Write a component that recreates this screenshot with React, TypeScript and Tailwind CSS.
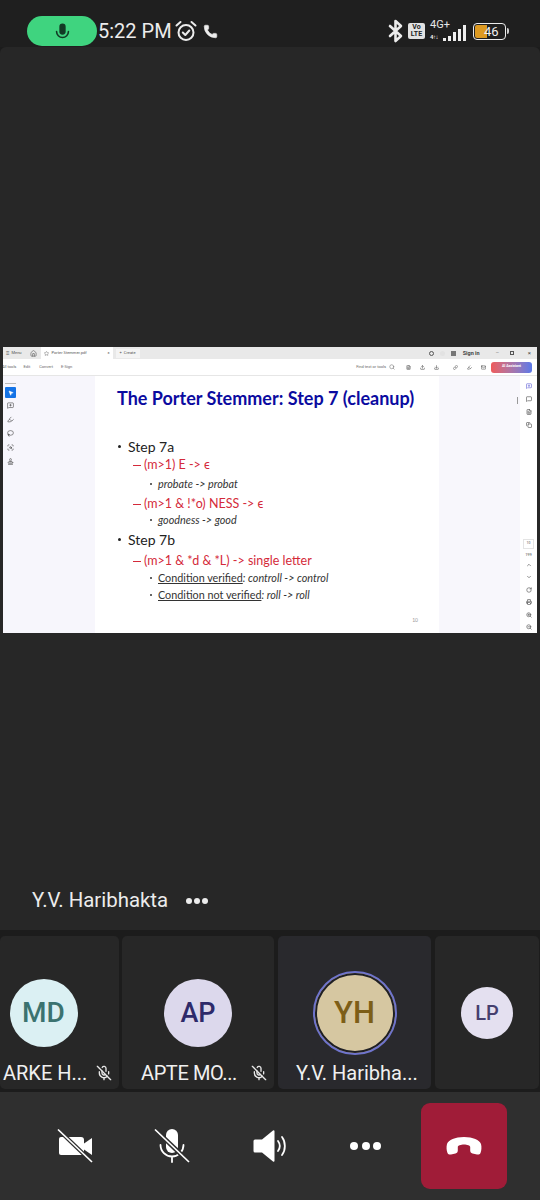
import { ChevronDown, ChevronUp, Copy, Download, FileText, Highlighter, Home, Lasso, Link, Mail, MessageSquare, MessageSquarePlus, MicOff, MousePointer2, Phone, Printer, RotateCw, ScanSearch, Search, Stamp, Star, Upload, ZoomIn, ZoomOut } from "lucide-react";
import type { ReactNode } from "react";

const FONT = "font-['Roboto','Liberation_Sans',sans-serif]";
const SLIDE_FONT = "font-['Lato','Liberation_Sans',sans-serif]";

function MicIcon({ className }: { className?: string }) {
  return (
    <svg viewBox="0 0 24 24" className={className} fill="none">
      <rect x="8" y="2" width="8" height="14" rx="4" fill="currentColor" />
      <path d="M4.500 12a7.500 7.500 0 0 0 15 0" stroke="currentColor" strokeWidth="2" strokeLinecap="round" />
    </svg>
  );
}

function AlarmIcon() {
  return (
    <svg viewBox="0 0 22 22" className="ml-[3px] h-[22px] w-[22px]" fill="none" stroke="currentColor" strokeWidth="2" strokeLinecap="round" strokeLinejoin="round">
      <circle cx="11" cy="12.500" r="7.500" />
      <path d="M7.800 12.500 10.300 15l4-4.500" />
      <path d="M1.500 5.500 5.500 2M20.500 5.500 16.500 2" />
    </svg>
  );
}

function BluetoothIcon() {
  return (
    <svg viewBox="0 0 16 24" className="ml-auto h-[24px] w-[16px]" fill="none" stroke="currentColor" strokeWidth="2.600" strokeLinejoin="round" strokeLinecap="round">
      <path d="M2 7l11 10-5.500 5V2L13 7 2 17" />
    </svg>
  );
}

function StatusBar() {
  return (
    <div className="flex h-[47px] items-center bg-[#1f1f1f] pt-[15px] text-[#ececec]">
      <div className="ml-[27px] flex h-[30px] w-[70px] items-center justify-center rounded-full bg-[#3fd47f] text-[#123a25]">
        <MicIcon className="h-[19px] w-[19px]" />
      </div>
      <span className="ml-[1px] text-[20px] leading-none">5:22 PM</span>
      <AlarmIcon />
      <Phone className="ml-[6px] h-[15px] w-[15px]" fill="currentColor" strokeWidth={1} />

      <BluetoothIcon />
      <div className="ml-[4px] flex h-[16px] w-[17px] flex-col items-center justify-center rounded-[2px] bg-[#e2e2e2] text-[7px] font-bold leading-[7px] text-[#222]">
        <span>Vo</span>
        <span>LTE</span>
      </div>
      <div className="relative ml-[5px] h-[20px] w-[36px]">
        <span className="absolute left-0 top-[-2px] text-[11px] leading-[11px] text-[#e8e8e8]">4G+</span>
        <span className="absolute bottom-[1px] left-0 text-[6px] font-bold leading-none tracking-[-0.5px] text-[#e8e8e8]">4↑↓</span>
        <div className="absolute bottom-0 right-0 flex items-end gap-[2px]">
          <div className="h-[3px] w-[3px] bg-[#eee]" />
          <div className="h-[5px] w-[3px] bg-[#eee]" />
          <div className="h-[9px] w-[3px] bg-[#eee]" />
          <div className="h-[12px] w-[3px] bg-[#eee]" />
          <div className="h-[16px] w-[3px] bg-[#eee]" />
        </div>
      </div>
      <div className="ml-[7px] flex h-[17px] w-[33px] items-center rounded-[4px] border-[1.5px] border-[#ececec] p-[1px]">
        <div className="relative flex h-full w-full items-center rounded-[2px]">
          <div className="h-full w-[12px] rounded-l-[2px] bg-[#dd9a22]" />
          <span className="absolute left-[9px] text-[13px] leading-none text-[#f0f0f0]">46</span>
        </div>
      </div>
      <div className="ml-[1px] mr-[31px] h-[6px] w-[2px] rounded-r-sm bg-[#cfcfcf]" />
    </div>
  );
}

function TitleBar() {
  return (
    <div className="flex h-[12px] items-center bg-[#e9e9e9] text-[4px] text-[#555]">
      <span className="ml-[3px] text-[6px] leading-none">≡</span>
      <span className="ml-[2px]">Menu</span>
      <Home className="ml-[8px] h-[7px] w-[7px]" />
      <div className="ml-[4px] flex h-full w-[72px] items-center bg-white px-[3px]">
        <Star className="h-[5px] w-[5px]" />
        <span className="ml-[3px]">Porter Stemmer.pdf</span>
        <span className="ml-auto">×</span>
      </div>
      <div className="ml-[3px] flex h-[9px] w-[24px] items-center justify-center gap-[2px] bg-[#f4f4f4]">
        <span>+</span>
        <span>Create</span>
      </div>
      <div className="ml-auto flex items-center text-[#444]">
        <span className="h-[5px] w-[5px] rounded-full border-[0.5px] border-[#555]" />
        <span className="ml-[6px] h-[5px] w-[5px] rounded-full bg-[#e2e2e2]" />
        <span className="ml-[6px] h-[5px] w-[5px] bg-[#777]" />
        <span className="ml-[7px] text-[5.5px] font-bold">Sign in</span>
        <span className="ml-[16px]">—</span>
        <span className="ml-[11px] h-[4px] w-[4px] border-[0.5px] border-[#555]" />
        <span className="ml-[14px] mr-[6px] text-[6px] leading-none">×</span>
      </div>
    </div>
  );
}

function ToolBar() {
  const icons = [FileText, Upload, Download, Link, Highlighter, Mail];
  return (
    <div className="flex h-[17px] items-center border-b border-[#e6e6e6] bg-white text-[4px] text-[#666]">
      <span className="-ml-[1px]">All tools</span>
      <span className="ml-[7px]">Edit</span>
      <span className="ml-[9px]">Convert</span>
      <span className="ml-[8px]">E-Sign</span>
      <span className="ml-auto">Find text or tools</span>
      <Search className="ml-[3px] h-[6px] w-[6px]" />
      <div className="ml-[11px] flex gap-[9px]">
        {icons.map((Icon, i) => (
          <Icon key={i} className={`h-[5px] w-[5px] ${i === 3 ? "ml-[5px]" : ""}`} strokeWidth={3} />
        ))}
      </div>
      <div className="ml-[5px] mr-[5px] flex h-[11px] w-[41px] items-center justify-center rounded-[3px] bg-gradient-to-r from-[#ee5a5a] to-[#5a78e8] text-[3.5px] font-bold text-white">
        AI Assistant
      </div>
    </div>
  );
}

function LeftTools() {
  const icons = [MessageSquarePlus, Highlighter, Lasso, ScanSearch, Stamp];
  return (
    <div className="flex w-[92px] flex-col bg-[#f7f6fc] pl-[2px] pt-[7px]">
      <div className="h-[1px] w-[11px] bg-[#bbb]" />
      <div className="mt-[3px] flex h-[11px] w-[11px] items-center justify-center rounded-[1px] bg-[#1473e6] text-white">
        <MousePointer2 className="h-[6px] w-[6px]" fill="currentColor" />
      </div>
      <div className="mt-[4px] flex flex-col gap-[7px] pl-[2px] text-[#444]">
        {icons.map((Icon, i) => (
          <Icon key={i} className="h-[7px] w-[7px]" />
        ))}
      </div>
    </div>
  );
}

function StepLine({ children, top }: { children: string; top: string }) {
  return (
    <p className={`flex items-center text-[14px] leading-[17px] text-[#222] ${top}`}>
      <span className="ml-[3px] mr-[7px] h-[3px] w-[3px] rounded-full bg-[#222]" />
      {children}
    </p>
  );
}

function RedLine({ children, top }: { children: string; top: string }) {
  return (
    <p className={`ml-[18px] flex items-center text-[12.5px] leading-[16px] text-[#d42a3a] ${top}`}>
      <span className="mr-[3px] h-[1px] w-[8px] bg-[#d42a3a]" />
      {children}
    </p>
  );
}

function SubLine({ children, top }: { children: ReactNode; top: string }) {
  return (
    <p className={`ml-[35px] flex items-center whitespace-pre text-[10.8px] leading-[13px] text-[#333] ${top}`}>
      <span className="mr-[6px] h-[2px] w-[2px] rounded-full bg-[#333]" />
      {children}
    </p>
  );
}

function Slide() {
  return (
    <div className={`relative w-[344px] bg-white ${SLIDE_FONT}`}>
      <h2 className="mt-[10px] whitespace-nowrap pl-[22px] text-[18px] font-bold leading-[24px] text-[#0b0ba0]">
        The Porter Stemmer: Step 7 (cleanup)
      </h2>
      <div className="mt-[28px] pl-[20px]">
        <StepLine top="">Step 7a</StepLine>
        <RedLine top="mt-[2px]">(m&gt;1) E -&gt; ϵ</RedLine>
        <SubLine top="mt-[4px]">
          <span className="italic">probate -&gt; probat</span>
        </SubLine>
        <RedLine top="mt-[6px]">(m&gt;1 &amp; !*o) NESS -&gt; ϵ</RedLine>
        <SubLine top="mt-[1px]">
          <span className="italic">goodness -&gt; good</span>
        </SubLine>
        <StepLine top="mt-[5px]">Step 7b</StepLine>
        <RedLine top="mt-[5px]">(m&gt;1 &amp; *d &amp; *L) -&gt; single letter</RedLine>
        <SubLine top="mt-[2px]">
          <span className="underline">Condition verified</span>
          <span className="italic">: controll -&gt; control</span>
        </SubLine>
        <SubLine top="mt-[4px]">
          <span className="underline">Condition not verified</span>
          <span className="italic">: roll -&gt; roll</span>
        </SubLine>
      </div>
      <span className="absolute bottom-[9px] right-[21px] text-[5px] text-[#999]">10</span>
    </div>
  );
}

function RightRail() {
  const top = [MessageSquarePlus, MessageSquare, FileText, Copy];
  const bottom = [ChevronUp, ChevronDown, RotateCw, Printer, ZoomIn, ZoomOut];
  return (
    <div className="flex w-[17px] flex-col items-center bg-white pt-[7px] text-[#555]">
      <div className="flex flex-col items-center gap-[7px]">
        {top.map((Icon, i) => (
          <Icon key={i} className={`h-[6px] w-[6px] ${i === 0 ? "text-[#6a6ad8]" : ""}`} strokeWidth={2.5} />
        ))}
      </div>
      <div className="mt-auto flex h-[10px] w-[11px] items-center justify-center border border-[#e4e4e4] text-[3.5px]">10</div>
      <span className="mt-[3px] text-[4px] leading-[5px]">199</span>
      <div className="mb-[3px] mt-[5px] flex flex-col items-center gap-[6.4px]">
        {bottom.map((Icon, i) => (
          <Icon key={i} className="h-[6px] w-[6px]" strokeWidth={2.5} />
        ))}
      </div>
    </div>
  );
}

function SharedScreen() {
  return (
    <div className="mx-[3px] flex h-[286px] flex-col overflow-hidden bg-white">
      <TitleBar />
      <ToolBar />
      <div className="flex min-h-0 flex-1">
        <LeftTools />
        <Slide />
        <div className="flex w-[81px] justify-end bg-[#f8f7fc] pr-[2px] pt-[21px]">
          <div className="h-[7px] w-[1.500px] bg-[#999]" />
        </div>
        <RightRail />
      </div>
    </div>
  );
}

type TileProps = {
  initials: string;
  name: string;
  widthClass: string;
  avatarClass: string;
  muted?: boolean;
  nameClass?: string;
  active?: boolean;
};

function Tile({ initials, name, widthClass, avatarClass, muted, nameClass, active }: TileProps) {
  return (
    <div className={`flex h-[153px] flex-col items-center rounded-[5px] ${widthClass} ${active ? "bg-[#29292d]" : "bg-[#272727]"}`}>
      <div className="flex h-[125px] shrink-0 items-center justify-center pt-[29px]">
        <div className={`flex items-center justify-center rounded-full font-medium ${avatarClass}`}>{initials}</div>
      </div>
      {name && (
        <div className={`flex w-full items-center text-[20px] leading-[24px] text-[#f0f0f0] ${nameClass ?? ""}`}>
          <span className="whitespace-nowrap">{name}</span>
          {muted && <MicOff className="ml-auto mr-[7px] h-[16px] w-[16px] text-[#e8e8e8]" strokeWidth={2} />}
        </div>
      )}
    </div>
  );
}

function VideoOffIcon() {
  return (
    <svg viewBox="0 0 36 36" className="h-[36px] w-[36px]" fill="none">
      <path d="M4 9h20a3 3 0 0 1 3 3v12a3 3 0 0 1-3 3H4a2 2 0 0 1-2-2V11a2 2 0 0 1 2-2Z" fill="#fff" />
      <path d="M27 15.500 35 10v17l-8-5.500Z" fill="#fff" />
      <path d="M1 1.500 35 34" stroke="#2f2f2f" strokeWidth="4" />
      <path d="M1 1.500 35 34" stroke="#fff" strokeWidth="1.700" />
    </svg>
  );
}

function MicOffIcon() {
  return (
    <svg viewBox="0 0 36 36" className="h-[36px] w-[36px]" fill="none">
      <rect x="12" y="1" width="12" height="24" rx="6" fill="#fff" />
      <path d="M6.500 17a11.500 11.500 0 0 0 23 0M18 29v5" stroke="#fff" strokeWidth="1.800" strokeLinecap="round" />
      <path d="M1 1.500 35 34" stroke="#2f2f2f" strokeWidth="4.500" />
      <path d="M1 1.500 35 34" stroke="#fff" strokeWidth="1.700" />
    </svg>
  );
}

function SpeakerIcon() {
  return (
    <svg viewBox="0 0 36 36" className="h-[36px] w-[36px]" fill="none">
      <path d="M3 11.500h7L21 2.500a1 1 0 0 1 1.500.8v29.400a1 1 0 0 1-1.500.8L10 24.500H3a1.500 1.500 0 0 1-1.500-1.500V13A1.500 1.500 0 0 1 3 11.500Z" fill="#fff" />
      <path d="M26 13c2.200 3 2.200 7 0 10M30 9c3.800 5 3.800 13 0 18" stroke="#fff" strokeWidth="1.800" strokeLinecap="round" />
    </svg>
  );
}

function HangupIcon() {
  return (
    <svg viewBox="0 0 36 20" className="h-[20px] w-[36px]" fill="#fff">
      <path d="M18 1C9 1 2.500 4 1 8c-.8 2.500-.5 7 .5 9 .6 1.300 2 1.800 3.500 1.500l4.500-1c1.500-.4 2.300-1.500 2.300-3V11c0-1.500 3-2.500 6.200-2.500S24.200 9.500 24.200 11v3.500c0 1.500.8 2.600 2.300 3l4.500 1c1.500.3 2.900-.2 3.500-1.500 1-2 1.300-6.500.5-9C33.500 4 27 1 18 1Z" />
    </svg>
  );
}

function Controls() {
  return (
    <div className="mt-[3px] flex h-[108px] items-center bg-[#2f2f2f]">
      <div className="ml-[57px] flex w-[36px] justify-center">
        <VideoOffIcon />
      </div>
      <div className="ml-[61px] flex w-[36px] justify-center">
        <MicOffIcon />
      </div>
      <div className="ml-[62px] flex w-[36px] justify-center">
        <SpeakerIcon />
      </div>
      <div className="ml-[62px] flex w-[31px] justify-between">
        <span className="h-[8px] w-[8px] rounded-full bg-white" />
        <span className="h-[8px] w-[8px] rounded-full bg-white" />
        <span className="h-[8px] w-[8px] rounded-full bg-white" />
      </div>
      <div className="ml-[40px] flex h-[86px] w-[86px] items-center justify-center rounded-[9px] bg-[#a01c38]">
        <HangupIcon />
      </div>
    </div>
  );
}

export default function App() {
  return (
    <div className={`flex h-[1200px] w-[540px] flex-col overflow-hidden bg-[#1c1c1c] ${FONT}`}>
      <StatusBar />
      <div className="flex h-[883px] flex-col rounded-t-[6px] bg-[#272727]">
        <div className="h-[300px]" />
        <SharedScreen />
        <div className="ml-[32px] mt-[255px] flex items-center text-[#ececec]">
          <span className="text-[20.4px] leading-[24px]">Y.V. Haribhakta</span>
          <div className="ml-[18px] mt-[2px] flex gap-[2px]">
            <span className="h-[6px] w-[6px] rounded-full bg-[#ececec]" />
            <span className="h-[6px] w-[6px] rounded-full bg-[#ececec]" />
            <span className="h-[6px] w-[6px] rounded-full bg-[#ececec]" />
          </div>
        </div>
      </div>
      <div className="mt-[6px] flex gap-[3px]">
        <Tile
          initials="MD"
          name="ARKE H..."
          muted
          widthClass="w-[119px]"
          nameClass="pl-[3px]"
          avatarClass="h-[68px] w-[68px] -translate-x-[16px] bg-[#dbf0f3] text-[28px] text-[#3b7370]"
        />
        <Tile
          initials="AP"
          name="APTE MO..."
          muted
          widthClass="w-[152px]"
          nameClass="pl-[19px] tracking-[-0.4px]"
          avatarClass="h-[68px] w-[68px] bg-[#dcd8ec] text-[27px] text-[#2e2a6a]"
        />
        <Tile
          initials="YH"
          name="Y.V. Haribha..."
          active
          widthClass="ml-[1px] w-[153px]"
          nameClass="pl-[18px]"
          avatarClass="h-[84px] w-[84px] border-[2px] border-[#6f74cc] bg-[#d6c7a1] text-[31px] text-[#7d5e17] outline-[2px] -outline-offset-[4px] outline-[#1f1f24]"
        />
        <Tile initials="LP" name="" widthClass="ml-[1px] w-[104px]" avatarClass="h-[52px] w-[52px] bg-[#e4e0f0] text-[20px] text-[#453f6e]" />
      </div>
      <Controls />
    </div>
  );
}
